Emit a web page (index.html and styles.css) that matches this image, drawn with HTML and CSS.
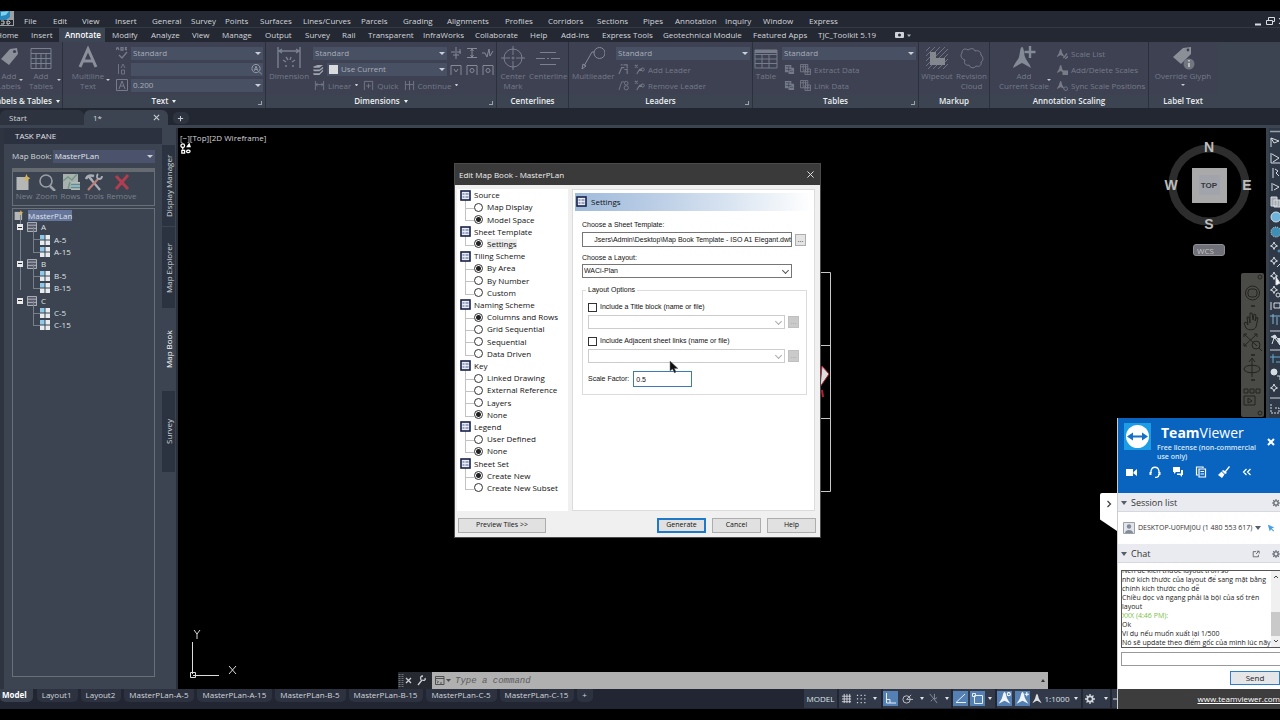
FILE: index.html
```html
<!DOCTYPE html>
<html lang="en">
<head>
<meta charset="utf-8">
<title>Map Book - MasterPLan</title>
<link rel="stylesheet" href="styles.css">
</head>
<body>
<svg class="defs" aria-hidden="true">
  <symbol id="node" viewBox="0 0 11 11"><rect x="1" y="1" width="9" height="9" fill="#e8edf8" stroke="#17204a" stroke-width="1.6"/><path d="M2.5 4h2M5.5 4h3M2.5 7h2M5.5 7h3" stroke="#4d5a8c"/></symbol>
  <symbol id="set" viewBox="0 0 11 11"><path d="M.5.5h10v10H.5zM.5 3.5h10M.5 7h10" fill="#555a68" stroke="#b9bcc4"/></symbol>
  <symbol id="tile" viewBox="0 0 10 10"><path fill="#8fc9ea" d="M0 0h4.5v4.5H0z"/><path fill="#e7ebee" d="M5.5 0H10v4.5H5.5zM0 5.5h4.5V10H0zM5.5 5.5H10V10H5.5z"/></symbol>
  <symbol id="page" viewBox="0 0 14 16"><path d="M0 3h12v13H0z" fill="#b5b7b7"/><path d="m10 0 1.3 3 2.7 1.2-2.7 1.3L10 8.500 8.700 5.500 6 4.200 8.700 3z" fill="#d3b362"/></symbol>
  <symbol id="dimh" viewBox="0 0 12 12"><path d="M1.500 1v10M10.500 1v10M2 5h8M4 3.500 2 5l2 1.500M8 3.500 10 5 8 6.500" fill="none" stroke="currentColor"/></symbol>
  <symbol id="quick" viewBox="0 0 12 12"><path d="M1.500 11V1.500h9V11M6 4v5M3.500 6.500h5" fill="none" stroke="currentColor"/></symbol>
  <symbol id="cont" viewBox="0 0 12 12"><path d="M1.500 1v10M6 1v10M10.500 1v10M2 5h8" fill="none" stroke="currentColor"/></symbol>
  <symbol id="brk" viewBox="0 0 12 12"><path d="M1 5h4M7 5h4M6 0v12M3 8h6M10 2v5" fill="none" stroke="currentColor"/></symbol>
  <symbol id="space" viewBox="0 0 12 12"><path d="M1 1.500h10M1 10.500h10M6 2v8M4.500 4 6 2l1.500 2M4.500 8 6 10l1.500-2" fill="none" stroke="currentColor"/></symbol>
  <symbol id="jog" viewBox="0 0 12 12"><path d="M0 6h3l2 4 2-8 1 7 3-5" fill="none" stroke="currentColor"/></symbol>
  <symbol id="tol" viewBox="0 0 12 12"><path d="M1 12V2.500h10V12M4 6l2 3 2-3" fill="none" stroke="currentColor"/></symbol>
  <symbol id="insp" viewBox="0 0 12 12"><path d="M1 12V2.500h10V12" fill="none" stroke="currentColor"/><circle cx="6" cy="7.500" r="2" fill="none" stroke="currentColor"/></symbol>
  <symbol id="leadA" viewBox="0 0 12 12"><path d="M1 11 4 4h3M6 1h4v4M7 6h3v5M3 1h2" fill="none" stroke="currentColor" stroke-width="1.300"/></symbol>
  <symbol id="leadB" viewBox="0 0 12 12"><path d="M1 11 4 2h3" fill="none" stroke="currentColor"/><circle cx="9" cy="3.500" r="2" fill="none" stroke="currentColor"/><circle cx="9" cy="8.500" r="2.300" fill="none" stroke="currentColor"/></symbol>
  <symbol id="leadC" viewBox="0 0 12 12"><path d="m1 1 3 3m0-3L1 4M3 11l3-5 3-1M6 7h3" fill="none" stroke="currentColor" stroke-width="1.200"/><circle cx="9.500" cy="6" r="1.700" fill="none" stroke="currentColor"/></symbol>
  <symbol id="xtr" viewBox="0 0 12 12"><path d="M1 1h7v3h3v7H5V9H1z" fill="currentColor"/><path d="M2 3h5M2 6h6M6 8h4M5 3v5" stroke="#3d4052" stroke-width=".7"/></symbol>
  <symbol id="grid" viewBox="0 0 12 12"><path d="M.500.500h8v8h-8zM.500 3h8M3.500.500v8M6 .500v8M5.500 5.500h6v6h-6zM5.500 8.500h6M8.500 5.500v6" fill="none" stroke="currentColor"/></symbol>
  <symbol id="man" viewBox="0 0 12 12"><path d="M6 0c1.300 0 1.500 4 2.500 6s2 3 3 5L7 8.500 6 8 5 8.500.500 11c1-2 2-3 3-5S4.700 0 6 0z" fill="currentColor"/></symbol>
  <symbol id="gear" viewBox="0 0 12 12"><circle cx="6" cy="6" r="3.200" fill="none" stroke="currentColor" stroke-width="2"/><path d="M6 0v3M6 9v3M0 6h3M9 6h3M1.800 1.800l2 2M8.200 8.200l2 2M10.200 1.800l-2 2M3.800 8.200l-2 2" stroke="currentColor" stroke-width="1.600"/></symbol>
  <symbol id="spark" viewBox="0 0 12 12"><path d="m4 1 1 2.500L7.500 5 5 6 4 8.500 3 6 .500 5 3 3.500z" fill="none" stroke="#d4dbe2"/></symbol>
</svg>

<div class="app">
  <header class="menubar">
    <svg class="logo" viewBox="0 0 14 15"><path d="M0 0h14v15H0z" fill="#9aa0a6"/><path d="M0 0h10v6L6 9H0z" fill="#2a87bd"/><path d="M1 1 9 0 6 4 1 5z" fill="#7bd0ec"/><path d="M0 9h13v5H0z" fill="#22262b"/><path d="M1 10h3v3H1M7 10v3h2l1-1.500L9 10z" fill="none" stroke="#cfd2d6"/></svg>
    <nav class="menu">
      <a href="#">File</a><a href="#">Edit</a><a href="#">View</a><a href="#">Insert</a><a href="#">General</a><a href="#">Survey</a><a href="#">Points</a><a href="#">Surfaces</a><a href="#">Lines/Curves</a><a href="#">Parcels</a><a href="#">Grading</a><a href="#">Alignments</a><a href="#">Profiles</a><a href="#">Corridors</a><a href="#">Sections</a><a href="#">Pipes</a><a href="#">Annotation</a><a href="#">Inquiry</a><a href="#">Window</a><a href="#">Express</a>
    </nav>
    <svg class="winctl" viewBox="0 0 26 12" fill="none" stroke="#d8dbe0"><path d="M1 9.500h6" stroke-width="2"/><path d="M12.500 5.500h6v4h-6zM14.500 5V2.500h6v4H19M25 3l5 6M30 3l-5 6" /></svg>
  </header>

  <nav class="tabs">
    <a href="#">Home</a><a href="#">Insert</a><a href="#" class="on">Annotate</a><a href="#">Modify</a><a href="#">Analyze</a><a href="#">View</a><a href="#">Manage</a><a href="#">Output</a><a href="#">Survey</a><a href="#">Rail</a><a href="#">Transparent</a><a href="#">InfraWorks</a><a href="#">Collaborate</a><a href="#">Help</a><a href="#">Add-ins</a><a href="#">Express Tools</a><a href="#">Geotechnical Module</a><a href="#">Featured Apps</a><a href="#">TJC_Toolkit 5.19</a>
    <svg class="tabmore" viewBox="0 0 16 8"><rect y="1" width="9" height="6" rx="1" fill="#cfd2d8"/><circle cx="4.500" cy="4" r="1.500" fill="#232834"/><path d="M12 3.500h4L14 6z" fill="#aeb3bc"/></svg>
  </nav>

  <section class="ribbon">
    <div class="panel p-labels">
      <div class="body">
        <button class="big w-lab"><svg class="ic" viewBox="0 0 24 24"><path d="m4 13 9-10 7-1 1 6-9 11z" fill="#8b8f9a"/><circle cx="17.500" cy="5.500" r="1.600" fill="#3d4052"/></svg>Add<br>Labels<i class="arr"></i></button>
        <button class="big w-tab"><svg class="ic" viewBox="0 0 24 24"><path d="M2 2.500h20v20H2zM2 7.500h20M2 12.500h20M2 17.500h20M7 7v15M12 7v15M17 7v15" fill="none" stroke="#7b8090"/></svg>Add<br>Tables<i class="arr"></i></button>
      </div>
      <h2>Labels &amp; Tables <i class="tri"></i></h2>
    </div>

    <div class="panel p-text">
      <div class="body">
        <button class="big w-multi"><svg class="ic" viewBox="0 0 24 24"><path d="M4 21 12 3l8 18M7 15h10" fill="none" stroke="#8b8f9a" stroke-width="3"/></svg>Multiline<br>Text<i class="arr"></i></button>
        <div class="iconcol">
          <svg viewBox="0 0 12 12"><path d="M0 3 1.500 0 3 3M5 0v3h2V0zM11 .500H9.500v2H11M3 8l3 3 5-6" fill="none" stroke="#777c8b" stroke-width="1.300"/></svg>
          <svg viewBox="0 0 12 12"><path d="M2.500 1v10M5 5l2-4 2 4M5.500 7v4h3V7z" fill="none" stroke="#6f7484"/></svg>
          <svg viewBox="0 0 12 12"><path d="M.500.500h11v11H.500zM3 10l3-8 3 8M4 7h4" fill="none" stroke="#777c8b"/></svg>
        </div>
        <div class="rows grow">
          <label class="combo"><select aria-label="Text style"><option>Standard</option></select></label>
          <div class="find"><input type="text" aria-label="Find text"><svg viewBox="0 0 12 12"><circle cx="5.500" cy="5.500" r="4.500" fill="none" stroke="#9a9faf"/><path d="m9 9 3 3M3.500 8l2-5 2 5M4.500 6.500h2" fill="none" stroke="#9a9faf"/></svg></div>
          <label class="combo"><select aria-label="Text height"><option>0.200</option></select></label>
        </div>
      </div>
      <h2>Text <i class="tri"></i><i class="launch"></i></h2>
    </div>

    <div class="panel p-dim">
      <div class="body">
        <button class="big w-dim"><svg class="ic" viewBox="0 0 24 24"><path d="M1 1v21M23 1v21M2 5h20M5 3 2 5l3 2M19 3l3 2-3 2M6 14l3 2M18 14l-3 2M9 11l2 3M14 11l-1 3M8 20h2M15 20h2" fill="none" stroke="#7b8090" stroke-width="1.400"/></svg>Dimension</button>
        <div class="rows dimrows">
          <label class="combo"><select aria-label="Dimension style"><option>Standard</option></select></label>
          <div class="line"><svg class="s" viewBox="0 0 12 12"><path d="m0 3 5-2h6L7 4H1zM0 6l7 0 4-3v2L7 8H1zM0 10h7l4-4v2L7 12H1z" fill="#a0a5b0"/></svg><label class="combo grow swatch"><select aria-label="Dimension layer"><option>Use Current</option></select></label></div>
          <div class="line dimcmds"><button><svg class="s"><use href="#dimh"/></svg>Linear<i class="dot"></i></button><button><svg class="s"><use href="#quick"/></svg>Quick</button><button><svg class="s"><use href="#cont"/></svg>Continue<i class="dot"></i></button></div>
        </div>
        <div class="icongrid"><svg><use href="#brk"/></svg><svg><use href="#space"/></svg><svg><use href="#jog"/></svg><svg><use href="#tol"/></svg><svg><use href="#insp"/></svg><svg><use href="#insp"/></svg></div>
      </div>
      <h2>Dimensions <i class="tri"></i><i class="launch"></i></h2>
    </div>

    <div class="panel p-center">
      <div class="body">
        <button class="big w-cm"><svg class="ic" viewBox="0 0 24 24"><circle cx="12" cy="12" r="9" fill="none" stroke="#7b8090"/><path d="M12 0v9M12 15v9M0 12h9M15 12h9M12 10.500v3M10.500 12h3" stroke="#7b8090"/></svg>Center<br>Mark</button>
        <button class="big w-cl"><svg class="ic" viewBox="0 0 24 24"><path d="M4 6.500h16M4 18.500h16M0 12.500h9M11 12.500h2M15 12.500h9" stroke="#7b8090"/></svg>Centerline</button>
      </div>
      <h2>Centerlines</h2>
    </div>

    <div class="panel p-lead">
      <div class="body">
        <button class="big w-ml"><svg class="ic" viewBox="0 0 24 24"><circle cx="18.500" cy="7" r="5.500" fill="none" stroke="#858a97"/><path d="M13 6h-2L3 20M1 23l1-5 3 2z" fill="none" stroke="#858a97"/></svg>Multileader</button>
        <div class="rows grow">
          <label class="combo"><select aria-label="Leader style"><option>Standard</option></select></label>
          <div class="line cmd"><svg class="s"><use href="#leadA"/></svg><button><svg class="s"><use href="#leadC"/></svg>Add Leader</button></div>
          <div class="line cmd"><svg class="s"><use href="#leadB"/></svg><button><svg class="s"><use href="#leadC"/></svg>Remove Leader</button></div>
        </div>
      </div>
      <h2>Leaders<i class="launch"></i></h2>
    </div>

    <div class="panel p-tables">
      <div class="body">
        <button class="big w-tb"><svg class="ic" viewBox="0 0 24 24"><path d="M1 4h22v18H1zM1 8.500h22M1 13h22M1 17.500h22M8 8v14M15 8v14" fill="none" stroke="#777c8b"/><path d="M1 4h22v3H1z" fill="#777c8b"/></svg>Table</button>
        <div class="rows grow">
          <label class="combo"><select aria-label="Table style"><option>Standard</option></select></label>
          <div class="line cmd"><svg class="s"><use href="#xtr"/></svg><button><svg class="s"><use href="#grid"/></svg>Extract Data</button></div>
          <div class="line cmd"><svg class="s"><use href="#xtr"/></svg><button><svg class="s"><use href="#grid"/></svg>Link Data</button></div>
        </div>
      </div>
      <h2>Tables<i class="launch"></i></h2>
    </div>

    <div class="panel p-mark">
      <div class="body">
        <button class="big w-wipe"><svg class="ic" viewBox="0 0 24 24"><path d="M1 5l4-4M1 10l9-9M1 15 15 1M1 20 20 1M3 23 23 3M8 23 23 8M13 23l10-10M18 23l5-5" stroke="#6f7484"/><path d="M5 6h6v6h9v7H5z" fill="#83888f"/></svg>Wipeout</button>
        <button class="big w-rev"><svg class="ic" viewBox="0 0 24 24"><path d="M5 14c-4-1-5-5-3-7 0-4 3-5 6-3 3-2 6-2 7 1 4-1 6 1 6 4 3 3 2 6 0 7 1 4-3 5-5 4-2 3-6 2-7-1-2 1-6-1-4-5z" fill="none" stroke="#777c8b"/></svg>Revision<br>Cloud</button>
      </div>
      <h2>Markup</h2>
    </div>

    <div class="panel p-scale">
      <div class="body">
        <button class="big w-scale"><svg class="ic" viewBox="0 0 24 24"><path d="M10 1c2 0 2 7 3 10s5 7 6 11l-7-4-2-1-2 1-7 4c1-4 5-8 6-11S8 1 10 1z" fill="#858a97"/><path d="M18 0v12M12.500 6h11" stroke="#858a97" stroke-width="2.400"/></svg>Add<br>Current Scale<i class="arr"></i></button>
        <div class="rows scales">
          <button class="line"><svg class="s" viewBox="0 0 12 12"><use href="#man" x="-1" width="10" height="12"/><path d="m7 11 4-5M9 12l3-3" stroke="currentColor" stroke-width="1.500"/></svg>Scale List</button>
          <button class="line"><svg class="s" viewBox="0 0 12 12"><use href="#man" x="-1" width="10" height="12"/><path d="M6 7h6v5H6z" fill="currentColor"/></svg>Add/Delete Scales</button>
          <button class="line"><svg class="s" viewBox="0 0 12 12"><use href="#man" x="-1" width="10" height="12"/><circle cx="9.500" cy="9.500" r="2" fill="#3d4152" stroke="currentColor"/></svg>Sync Scale Positions</button>
        </div>
      </div>
      <h2>Annotation Scaling</h2>
    </div>

    <div class="panel p-glyph">
      <div class="body">
        <button class="big w-glyph"><svg class="ic" viewBox="0 0 24 24"><path d="m2 11 10-9 8-1v7L10 18z" fill="#8b8f98"/><circle cx="17" cy="4" r="1.400" fill="#3d4052"/><circle cx="18" cy="18" r="5.500" fill="#71767f"/><path d="M18 17v4M18 14v1.500" stroke="#d0d3d8" stroke-width="1.500"/></svg>Override Glyph<i class="arr below"></i></button>
      </div>
      <h2>Label Text</h2>
    </div>
  </section>

  <nav class="docs">
    <a href="#" class="d1">Start</a>
    <a href="#" class="d2 on"><span>1*</span><svg viewBox="0 0 8 8"><path d="m1 1 6 6M7 1 1 7" stroke="#c9ccd2" stroke-width="1.300"/></svg></a>
    <button aria-label="New drawing"><svg viewBox="0 0 8 8"><path d="M4 1v6M1 4h6" stroke="#c9ccd2" stroke-width="1.200"/></svg></button>
  </nav>

  <main class="main">
    <aside class="side">
      <div class="task">
        <h3>TASK PANE</h3>
        <div class="mapbook"><label for="mb">Map Book:</label><span class="combo"><select id="mb"><option>MasterPLan</option></select></span></div>
        <div class="tools">
          <button class="t1"><svg viewBox="0 0 18 18"><use href="#page" x="1" y="1" width="15" height="16"/></svg>New</button>
          <button class="t2"><svg viewBox="0 0 18 18" fill="none" stroke="#9a9ea6"><circle cx="8" cy="8" r="6" stroke-width="1.600"/><path d="m12 13 5 5" stroke-width="2.500"/></svg>Zoom</button>
          <button class="t3"><svg viewBox="0 0 18 18"><path d="M1 1h15v15H1z" fill="#a9b0ae"/><path d="m1 8 5-4 4 3 5-6M6 16l2-7" fill="none" stroke="#6f9a86" stroke-width="1.500"/><path d="M9 9h9v8H9z" fill="#b5bcb8"/><path d="M9 11.500h9M9 14.500h9" stroke="#5b8e9c" stroke-width="1.400"/></svg>Rows</button>
          <button class="t4"><svg viewBox="0 0 18 18" fill="none"><path d="M5 5 15 17" stroke="#a9adb5" stroke-width="2.200"/><path d="M13 6 3 17" stroke="#b97d78" stroke-width="2.200"/><path d="M1 6c1-3 4-4 8-3M4 4l3 3" stroke="#a9adb5" stroke-width="2.400"/><path d="M13 1c-2 2-1 5 1 5s3-1 3-3" stroke="#a9adb5" stroke-width="1.800"/></svg>Tools</button>
          <button class="t5"><svg viewBox="0 0 18 18"><path d="m3 3 12 13M15 2 3 16" stroke="#b13d50" stroke-width="3"/></svg>Remove</button>
        </div>
        <div class="tree">
          <ul>
            <li class="root"><svg><use href="#page"/></svg><span>MasterPLan</span></li>
            <li class="g"><b></b><svg><use href="#set"/></svg>A</li>
            <li class="c"><svg><use href="#tile"/></svg>A-5</li>
            <li class="c"><svg><use href="#tile"/></svg>A-15</li>
            <li class="g"><b></b><svg><use href="#set"/></svg>B</li>
            <li class="c"><svg><use href="#tile"/></svg>B-5</li>
            <li class="c"><svg><use href="#tile"/></svg>B-15</li>
            <li class="g last"><b></b><svg><use href="#set"/></svg>C</li>
            <li class="c"><svg><use href="#tile"/></svg>C-5</li>
            <li class="c"><svg><use href="#tile"/></svg>C-15</li>
          </ul>
        </div>
      </div>
      <nav class="vtabs"><a href="#">Display Manager</a><a href="#">Map Explorer</a><a href="#" class="on">Map Book</a><a href="#">Survey</a></nav>
    </aside>

    <section class="canvas">
      <p class="viewlabel">[−][Top][2D Wireframe]</p>
      <svg class="gizmo" viewBox="0 0 12 12" fill="none" stroke="#fff" stroke-width="1.400"><circle cx="3" cy="3" r="2"/><path d="M3 4v3M8 4l2-3 1 3zM2 8h3v3H2z"/><path d="M7 9c1-2 4-1 4 0s-3 3-4 0z"/></svg>
      <svg class="ucs" viewBox="0 0 50 52" fill="none" stroke="#dcdcdc"><path d="M2.500 14v32M3 47.500h26M.500 44.500h5v5h-5zM4 2l3 4 3-4M7 6v5M39 38l7 8M46 38l-7 8"/></svg>
      <svg class="sheets" viewBox="0 0 20 221" fill="none" stroke="#c8c8c8"><path d="M0 .500h18.500V219.500H0M0 73.500h18.500M0 146.500h18.500"/><path d="m10 94 7 8-9 13z" fill="#ddd" stroke="#b32036"/><path d="m10 118 1 7" stroke="#b32036" stroke-width="2"/></svg>

      <svg class="cube" viewBox="0 0 90 92"><circle cx="45" cy="45" r="36.500" fill="none" stroke="#2d2d2d" stroke-width="8"/><path d="M28 28h35v35H28z" fill="#a9a9a9"/><path d="M35 35h21v20H35z" fill="#a1a4aa"/><g font-family="Liberation Sans, sans-serif" font-weight="700" text-anchor="middle"><g fill="#bdbdbd" font-size="14" stroke="none"><text x="45" y="12">N</text><text x="45" y="89">S</text><text x="7" y="50">W</text><text x="83" y="50">E</text></g><text x="45" y="48" font-size="8" fill="#33373d">TOP</text></g></svg>
      <button class="wcs">WCS <i></i></button>
      <svg class="navbar" viewBox="0 0 23 144" fill="none" stroke="#23221f"><rect width="23" height="144" rx="2" fill="#4a4a47" stroke="none"/><circle cx="19" cy="4" r="2"/><circle cx="11.500" cy="20" r="7"/><rect x="7" y="16" width="9" height="8" rx="3"/><path d="M10 33h4M10 82h4M10 107h4" stroke-width="1.500"/><path d="m5 55-2-5 2-1 2 3-1-8 2 0 1 6V40h2l1 7 1-6 2 1-1 6 2-4 1 1-2 9c-1 3-7 4-10 1zM3 61l13 12M16 61 3 73M3 64v-3h3M3 70v3h3M13 61h3v3"/><circle cx="15" cy="72" r="4"/><path d="m18 75 3 3M11 86v18M8 89l3-4 3 4M3 96c0-5 16-5 16 0s-16 5-16 0M3 116h4v4H3zM9 116h4v4H9zM15 116h4v4h-4zM3 123h11v9H3zM7 125v5l4-2z"/><circle cx="19" cy="140" r="2"/></svg>

      <div class="cmdline">
        <svg class="grip" viewBox="0 0 30 17"><path d="M4.500 2v13M1.500 2v13" stroke="#6d7177" stroke-width="2" stroke-dasharray="1 1"/><path d="m8 6 5 5M13 6l-5 5M20 13l4-5" fill="none" stroke="#cfd1d5" stroke-width="1.300"/><path d="M23 8c-1-3 0-4 2-4M24 8c2 1 4 0 3-2" fill="none" stroke="#cfd1d5" stroke-width="1.300"/></svg>
        <label class="cmdbox"><svg viewBox="0 0 16 10"><path d="M.500.500h8.500v8H.500zM.500 2.500H9M2 4.500 3.500 6 2 7M5 7h2" fill="none" stroke="#505050"/><path d="M11 3h5l-2.500 3z" fill="#505050"/></svg><input type="text" aria-label="Command" placeholder="Type a command"><i class="up"></i></label>
      </div>
    </section>

    <aside class="rail">
      <svg viewBox="0 0 10 290" fill="none" stroke="#d4dbe2"><path d="M0 1.500h10M0 201h10M0 220h10M0 268h10" stroke="#99a0aa" stroke-width="1.500"/><path d="M1 8v9M1 8l8 3-5 2zM1 23v10h9M2 24l7 4-6 4M3 38v10M5 39l3 2-2 2 3 3M2 53v8M3 54l6 3-5 3" fill="none"/><path d="M1 67h6v9H1zM4 70h6v7H4z" fill="#a3a8ad"/><circle cx="6" cy="87" r="5" fill="#6db4dc"/><circle cx="6" cy="102" r="5" fill="#3f8fb5" stroke-dasharray="1 1"/><use href="#spark" x="0" y="111" width="12" height="12"/><circle cx="9" cy="121" r="1" stroke="#57a7d4"/><use href="#spark" x="0" y="126" width="12" height="12"/><path d="m7 137 3-3"/><use href="#spark" x="0" y="141" width="12" height="12"/><path d="M6 147v8l4-2z" fill="#fff"/><use href="#spark" x="0" y="155" width="12" height="12"/><circle cx="8" cy="165" r="2"/><path d="M1 172v8M4 173h6v5H4z"/><path d="M0 186h10M3 184v10M7 187v8" stroke="#7fb6d6"/><path d="M1 207l4-2 4 6M5 205l-3 9M5 208l5 7V208" fill="#d4dbe2"/><path d="M0 227h10M3 224v9M6 232h4" stroke="#62a9cf"/><circle cx="4" cy="242" r="3" fill="#d4dbe2"/><path d="M7 246h3v4"/><use href="#spark" x="0" y="253" width="12" height="12"/><path d="M1 274v9h8v-5H4" stroke-dasharray="2 1"/></svg>
    </aside>
  </main>

  <footer class="bottom">
    <nav class="layouts"><a href="#" class="on">Model</a><a href="#">Layout1</a><a href="#">Layout2</a><a href="#">MasterPLan-A-5</a><a href="#">MasterPLan-A-15</a><a href="#">MasterPLan-B-5</a><a href="#">MasterPLan-B-15</a><a href="#">MasterPLan-C-5</a><a href="#">MasterPLan-C-15</a><a href="#">+</a></nav>
    <div class="status">
      <button class="cell s1">MODEL</button>
      <span class="cell s2"><svg viewBox="0 0 12 12" stroke="#d5d8dd"><path d="M3.500 1v10M6.500 1v10M9.500 1v10M1 3.500h10M1 6.500h10M1 9.500h10"/></svg><svg viewBox="0 0 12 12" stroke="#d5d8dd" stroke-width="1.300" stroke-dasharray="1.300 2.700"><path d="M1 2.500h10M1 6.500h10M1 10.500h10"/></svg><i class="tri"></i></span>
      <span class="cell s3"><svg class="hot" viewBox="0 0 15 15" fill="none" stroke="#e6edf5"><path d="M3.500 2v10H13M3.500 8.500H7V12"/></svg><svg viewBox="0 0 12 12" fill="none" stroke="#c5c9cf"><circle cx="5" cy="7" r="4"/><path d="M5 7l5-5M5 7h7"/></svg><i class="tri"></i><svg viewBox="0 0 12 12" fill="none" stroke="#8c929c"><path d="m2 1 8 10M7 1v6M7 7l3-2M3 9l2-2"/></svg><i class="tri"></i></span>
      <span class="cell s4"><svg class="hot" viewBox="0 0 15 15" fill="none" stroke="#e6edf5"><path d="M12 3 3 11.500h10"/></svg><svg class="hot" viewBox="0 0 15 15" fill="none" stroke="#e6edf5"><path d="M4.500 4.500h8v8h-8zM2.500 2.500h3v3h-3z"/></svg><i class="tri"></i></span>
      <span class="cell s5"><svg class="hot" viewBox="-1 -1 14 14" color="#f1f5f8"><use href="#man" width="12" height="12"/><circle cx="10" cy="2" r="1.500" fill="#5c86b5" stroke="#fff"/></svg><svg class="hot" viewBox="-1 -1 14 14" color="#f1f5f8"><use href="#man" width="12" height="12"/><path d="M10 0v4M8 2h4" stroke="#fff"/></svg><svg class="sm" color="#dcdfe4"><use href="#man"/></svg><span>1:1000</span><i class="tri"></i></span>
      <span class="cell s6"><svg class="sm" color="#d5d8dd"><use href="#gear"/></svg><i class="tri"></i></span>
      <span class="cell s7"><svg viewBox="0 0 4 4"><path d="M0 2h4" stroke="#dfe2e6"/></svg></span>
    </div>
  </footer>
</div>

<section class="dialog" role="dialog" aria-label="Edit Map Book - MasterPLan">
  <header><span>Edit Map Book - MasterPLan</span><button aria-label="Close"><svg viewBox="0 0 8 8"><path d="m.500.500 7 7M7.500.500l-7 7" stroke="#e4e4e4" stroke-width="1.100"/></svg></button></header>
  <div class="content">
    <div class="nav">
      <div class="list">
        <h4><svg><use href="#node"/></svg>Source</h4>
        <label><input type="radio" name="src">Map Display</label>
        <label class="end"><input type="radio" name="src" checked>Model Space</label>
        <h4><svg><use href="#node"/></svg>Sheet Template</h4>
        <label class="end"><input type="radio" name="tpl" checked><span class="cur">Settings</span></label>
        <h4><svg><use href="#node"/></svg>Tiling Scheme</h4>
        <label><input type="radio" name="til" checked>By Area</label>
        <label><input type="radio" name="til">By Number</label>
        <label class="end"><input type="radio" name="til">Custom</label>
        <h4><svg><use href="#node"/></svg>Naming Scheme</h4>
        <label><input type="radio" name="nam" checked>Columns and Rows</label>
        <label><input type="radio" name="nam">Grid Sequential</label>
        <label><input type="radio" name="nam">Sequential</label>
        <label class="end"><input type="radio" name="nam">Data Driven</label>
        <h4><svg><use href="#node"/></svg>Key</h4>
        <label><input type="radio" name="key">Linked Drawing</label>
        <label><input type="radio" name="key">External Reference</label>
        <label><input type="radio" name="key">Layers</label>
        <label class="end"><input type="radio" name="key" checked>None</label>
        <h4><svg><use href="#node"/></svg>Legend</h4>
        <label><input type="radio" name="leg">User Defined</label>
        <label class="end"><input type="radio" name="leg" checked>None</label>
        <h4><svg><use href="#node"/></svg>Sheet Set</h4>
        <label><input type="radio" name="ss" checked>Create New</label>
        <label class="end"><input type="radio" name="ss">Create New Subset</label>
      </div>
    </div>
    <div class="pane">
      <h3><svg><use href="#node"/></svg>Settings</h3>
      <div class="form">
        <label class="cap" for="tplfile">Choose a Sheet Template:</label>
        <div class="field"><div class="clip"><input id="tplfile" type="text" value="Jsers\Admin\Desktop\Map Book Template - ISO A1 Elegant.dwt"></div><button class="more">...</button></div>
        <label class="cap second" for="lay">Choose a Layout:</label>
        <span class="drop"><select id="lay"><option>WACi-Plan</option></select></span>
        <fieldset>
          <legend>Layout Options</legend>
          <label class="check"><input type="checkbox">Include a Title block (name or file)</label>
          <div class="field"><span class="drop off"><select disabled aria-label="Title block"><option></option></select></span><button class="more" disabled>...</button></div>
          <label class="check"><input type="checkbox">Include Adjacent sheet links (name or file)</label>
          <div class="field"><span class="drop off"><select disabled aria-label="Adjacent sheet links"><option></option></select></span><button class="more" disabled>...</button></div>
          <div class="scale"><label for="sf">Scale Factor:</label><input id="sf" type="text" value="0.5"></div>
        </fieldset>
      </div>
    </div>
  </div>
  <footer><button class="prev">Preview Tiles &gt;&gt;</button><button class="def">Generate</button><button>Cancel</button><button>Help</button></footer>
</section>
<svg class="cursor" viewBox="0 0 10 14"><path d="M1 1v10l2.500-2 2 4 1.500-1-1.500-3.500H9z" fill="#111" stroke="#777" stroke-width=".5"/></svg>

<section class="tv">
  <button class="flap" aria-label="Collapse"><svg viewBox="0 0 6 8"><path d="m1.500 1 3 3-3 3" fill="none" stroke="#444" stroke-width="1.300"/></svg></button>
  <header>
    <svg class="tvlogo" viewBox="0 0 27 27"><rect width="27" height="27" fill="#1c9de5"/><circle cx="13.500" cy="13.500" r="11.500" fill="#fff"/><path d="m3 13.500 6-4v3h9v-3l6 4-6 4v-3H9v3z" fill="#1670c4"/></svg>
    <div class="tvtext"><h2><b>Team</b>Viewer</h2><p>Free license (non-commercial<br>use only)</p></div>
    <button class="x" aria-label="Close"><svg viewBox="0 0 8 8"><path d="m1 1 6 6M7 1 1 7" stroke="#fff" stroke-width="2"/></svg></button>
    <div class="tvicons">
      <svg viewBox="0 0 12 12" fill="#fff"><path d="M0 3h7v7H0zM7.500 6 11 3v7L7.500 7.500z"/></svg>
      <svg viewBox="0 0 12 12" fill="none" stroke="#fff" stroke-width="1.300"><path d="M2 7V5c1-5 7-5 8 0v2M10 8c0 3-2 3.500-4 3.500"/><path d="M1.500 6v3M10.500 6v3" stroke-width="2"/></svg>
      <svg viewBox="0 0 12 12" fill="#fff"><path d="M1 1h7v5H4L2 8V6H1z"/><path d="M9 4h2v5h-1v2L8 9H5V7.500h4z"/></svg>
      <svg viewBox="0 0 12 12" fill="none" stroke="#fff" stroke-width="1.200"><path d="M8 2V1H1.500v8H3M4 3h6.500v8H4zM5.500 5.500H9M5.500 8H9"/></svg>
      <svg viewBox="0 0 12 12" fill="#fff"><path d="m11 0 1 1-4 5 1 1-2 1-3-3 1-1 2 1zM3.500 5.500l3 3L4 12 0 9z"/></svg>
      <svg viewBox="0 0 12 12" fill="none" stroke="#fff" stroke-width="1.300"><path d="M5.500 3 2.500 6l3 3M9.500 3l-3 3 3 3"/></svg>
    </div>
  </header>
  <h3><i class="tri"></i>Session list<svg class="g1"><use href="#gear"/></svg></h3>
  <div class="session"><svg viewBox="0 0 12 12"><path d="M.500.500h11v11H.500z" fill="#e2e5ea" stroke="#9ba1ab"/><circle cx="6" cy="4.500" r="2.200" fill="#848c99"/><path d="M2 11c0-4 8-4 8 0z" fill="#848c99"/></svg><span>DESKTOP-U0FMJ0U (1 480 553 617)</span><i class="tri"></i><svg class="ptr" viewBox="0 0 10 12"><path d="m1 2 8 3-3 1.500 3 3-1 1-3-3-1.500 3z" fill="#4aa0e6"/></svg></div>
  <h3><i class="tri"></i>Chat<svg class="pop" viewBox="0 0 10 10" fill="none" stroke="#555"><path d="M5 2H1.500v6.500H8V6M5 5l3.500-3.500M6 1.500h3v3"/></svg><svg class="g1"><use href="#gear"/></svg></h3>
  <div class="chat">
    <div class="log"><div class="lines"><p>Nên để kích thước layout tròn số</p><p>nhớ kích thước của layout để sang mặt bằng</p><p>chính kích thước cho dễ</p><p>Chiều dọc và ngang phải là bội của số trên</p><p>layout</p><p class="who">XXX (4:46 PM):</p><p>Ok</p><p>Ví dụ nếu muốn xuất lại 1/500</p><p>Nó sẽ update theo điểm gốc của mình lúc nãy</p></div><div class="bar"><svg viewBox="0 0 6 4"><path d="m1 3 2-2 2 2" fill="none" stroke="#444"/></svg><i></i><svg viewBox="0 0 6 4"><path d="m1 1 2 2 2-2" fill="none" stroke="#444"/></svg></div></div>
    <input type="text" aria-label="Message">
    <button>Send</button>
  </div>
  <footer><a href="#">www.teamviewer.com</a></footer>
</section>
</body>
</html>
```

FILE: styles.css
```css
* { box-sizing: border-box; margin: 0; padding: 0; }
html, body { height: 100%; }
body { background: #000; overflow: hidden; position: relative; font: 8px/10px "Open Sans", "Noto Sans", sans-serif; color: #d3d6db; }
a { color: inherit; text-decoration: none; white-space: nowrap; }
button, input, select { font: inherit; color: inherit; background: none; border: 0; outline: 0; border-radius: 0; }
button { white-space: nowrap; }
select { appearance: none; width: 100%; height: 100%; opacity: 1; }
ul { list-style: none; }
h2, h3, h4 { font-size: inherit; font-weight: 400; }
svg { display: block; flex: none; }
.defs { position: absolute; width: 0; height: 0; }
.grow { flex: 1; }

.app { height: 100%; padding: 11px 0; display: flex; flex-direction: column; }

/* menu bar */
.menubar { height: 17px; background: #232832; display: flex; align-items: center; border-bottom: 1px solid #333b42; flex: none; }
.logo { width: 14px; height: 15px; align-self: flex-start; }
.menu { flex: 1; margin-left: 10px; display: grid; grid-template-columns: 29px 29px 33px 37px 39px 34px 35px 43px 58px 42px 44px 58px 43px 49px 46px 32px 50px 38px 46px 1fr; padding-top: 3px; }
.winctl { width: 26px; height: 12px; margin-top: 4px; }

.tabs { height: 14px; flex: none; background: #232832; display: grid; grid-template-columns: 35px 28px 53px 39px 41px 30px 43px 40px 37px 26px 55px 52px 55px 31px 41px 61px 90px 65px 77px 16px; margin-left: -4px; align-items: center; overflow: hidden; }
.tabs a { line-height: 14px; }
.tabs .on { background: #3c4553; color: #fff; font-weight: 600; padding-left: 6px; justify-self: start; width: 46px; }
.tabmore { width: 16px; height: 8px; }

/* ribbon */
.ribbon { height: 66px; background: #3b4450; display: flex; flex: none; overflow: hidden; }
.panel { display: flex; flex-direction: column; flex: none; border-right: 1px solid #2b313c; }
.panel .body { flex: 1; display: flex; align-items: flex-start; padding-top: 5px; background: #3d4152; color: #757a88; }
.panel h2 { position: relative; height: 13px; line-height: 12px; text-align: center; color: #eceef1; background: #3b4450; font-weight: 600; white-space: nowrap; }
.p-labels { width: 63px; } .p-text { width: 203px; } .p-dim { width: 231px; } .p-center { width: 72px; } .p-lead { width: 184px; }
.p-tables { width: 166px; } .p-mark { width: 71px; } .p-scale { width: 159px; } .p-glyph { width: 68px; }
.p-glyph { border-right: 0; }
.panel.p-labels h2 { margin-left: -10px; }
.tri { display: inline-block; border: 2px solid transparent; border-top: 3px solid currentColor; border-bottom: 0; vertical-align: middle; margin-left: 2px; }
.launch { position: absolute; right: 3px; bottom: 3px; width: 4px; height: 4px; border: solid #9da2ab; border-width: 0 1px 1px 0; }
.big { position: relative; display: block; text-align: center; line-height: 10px; flex: none; }
.big .ic { width: 24px; height: 24px; margin: -1px auto 1px; }
.arr { position: absolute; right: -1px; top: 32px; border: 2px solid transparent; border-top: 2px solid #c8cbd1; border-bottom: 0; }
.arr.below { right: 32px; top: 37px; }
.w-lab { width: 26px; margin-left: -4px; } .w-tab { width: 38px; }
.w-multi { width: 42px; margin-left: 4px; }
.w-dim { width: 42px; margin-left: 2px; }
.w-cm { width: 32px; } .w-cl { width: 38px; }
.w-ml { width: 42px; margin: 0 2px 0 3px; }
.w-tb { width: 26px; margin-right: 3px; }
.w-wipe { width: 36px; } .w-rev { width: 33px; }
.w-scale { width: 52px; margin: 0 7px 0 8px; }
.w-glyph { width: 68px; }
.iconcol { display: grid; gap: 4px; margin: 0 3px 0 7px; }
.iconcol svg { width: 12px; height: 12px; }
.rows { display: grid; grid-template-columns: minmax(0, 1fr); grid-auto-rows: 13px; gap: 3px; min-width: 0; padding-right: 2px; }
.dimrows { width: 134px; padding: 0; margin-left: 3px; flex: none; }
.combo { position: relative; display: block; height: 13px; background: #485063; color: #a8adb8; }
.combo select { padding: 0 10px 1px 2px; }
.combo::after { content: ""; position: absolute; right: 2px; top: 5px; border: 3px solid transparent; border-top: 3px solid #ccd0d6; border-bottom: 0; }
.find { display: flex; background: #485063; padding-right: 1px; }
.find input { flex: 1; min-width: 0; }
.find svg { width: 11px; height: 12px; }
.line { display: flex; align-items: center; gap: 3px; text-align: left; white-space: nowrap; }
.s { width: 11px; height: 11px; }
.swatch select { padding-left: 14px; }
.swatch::before { content: ""; position: absolute; left: 2px; top: 2px; width: 9px; height: 9px; background: #d9dade; }
.line button { display: flex; align-items: center; gap: 3px; }
.cmd { gap: 5px; padding-left: 2px; }
.dimcmds { gap: 5px; padding-left: 1px; }
.dot { width: 3px; border: 1px solid transparent; border-top: 2px solid #c8cbd1; margin-left: 1px; }
.icongrid { display: grid; grid-template-columns: repeat(3, 12px); gap: 4px; padding-left: 3px; color: #858a97; }
.icongrid svg { width: 12px; height: 12px; }
.scales { color: #777c88; width: 90px; padding: 0; }

/* drawing tabs */
.docs { height: 20px; background: #222731; display: flex; align-items: flex-end; border-bottom: 3px solid #3b4450; flex: none; }
.docs a { height: 15px; line-height: 15px; border-radius: 6px 6px 0 0; background: #2d3440; padding-left: 9px; }
.d1 { width: 84px; }
.docs .on { width: 84px; background: #3b4450; display: flex; align-items: center; justify-content: space-between; padding-right: 8px; }
.docs svg { width: 7px; height: 7px; }
.docs button { width: 16px; height: 12px; background: #2d3440; border-radius: 5px; margin: 0 0 1px 5px; padding-left: 4px; }

.main { flex: 1; min-height: 0; display: flex; }
.side { width: 178px; flex: none; display: flex; background: #3b4450; border-left: 4px solid #2e3540; }
.task { flex: 1; display: flex; flex-direction: column; min-width: 0; padding: 0 7px 12px 8px; }
.task h3 { height: 16px; line-height: 16px; margin: 0 -7px 0 -8px; padding-left: 11px; background: #2c3140; color: #e2e4e8; }
.mapbook { display: flex; align-items: center; margin-top: 5px; gap: 1px; height: 14px; }
.mapbook .combo { flex: 1; background: #4a536b; color: #e2e4e8; }
.tools { display: flex; height: 38px; margin-top: 5px; border: 1px solid #687078; border-top: 4px solid #666b72; padding-top: 1px; color: #7b828d; flex: none; }
.tools button { text-align: center; line-height: 10px; flex: none; align-self: flex-start; }
.tools svg { width: 18px; height: 18px; margin: 0 auto; }
.t1 { width: 22px; } .t2 { width: 23px; } .t3 { width: 25px; } .t4 { width: 22px; } .t5 { width: 33px; }
.tree { flex: 1; margin-top: 2px; border: 1px solid #687078; }
.tree ul { height: 122px; display: flex; flex-direction: column; color: #dfe2e6; }
.tree li { flex: 1; display: flex; align-items: center; position: relative; }
.tree svg { width: 10px; height: 10px; }
.root span { background: #66759b; line-height: 11px; margin-left: 4px; }
.root svg { margin-left: 1px; }
.g { padding-left: 4px; gap: 4px; }
.g b { width: 6px; height: 6px; background: linear-gradient(#333, #333) center / 4px 1px no-repeat #e8eaec; z-index: 1; }
.c { padding-left: 27px; gap: 4px; }
.c::before { content: ""; position: absolute; left: 20px; top: -6px; width: 6px; height: 12px; border: solid #78808a; border-width: 0 0 1px 1px; }
.tree li:not(.root):not(.last)::after { content: ""; position: absolute; left: 7px; top: -6px; height: 14px; border-left: 1px solid #78808a; }
.tree .last ~ li::after { display: none; }
.vtabs { width: 16px; padding: 17px 3px 0 0; display: flex; flex-direction: column; gap: 1px; border-right: 2px solid #2b313b; }
.vtabs a { writing-mode: vertical-rl; transform: rotate(180deg); height: 81px; width: 13px; line-height: 13px; text-align: center; background: #2c3340; }
.vtabs .on { background: #3b4450; color: #fff; }

/* model space */
.canvas { flex: 1; min-width: 0; position: relative; background: #000; overflow: hidden; }
.viewlabel { padding: 5px 2px; }
.gizmo { position: absolute; left: 2px; top: 15px; width: 11px; height: 11px; }
.ucs { position: absolute; left: 12px; bottom: 9px; width: 50px; height: 52px; }
.sheets { position: absolute; left: 634px; top: 144px; width: 20px; height: 221px; }
.cube { position: absolute; right: 12px; top: 12px; width: 90px; height: 92px; }
.wcs { position: absolute; right: 41px; top: 116px; width: 32px; height: 12px; background: #707078; border: 1px solid #8e8e94; border-radius: 3px; color: #c4c4c8; line-height: 9px; text-align: left; padding-left: 3px; }
.navbar { position: absolute; right: 2px; top: 145px; width: 23px; height: 144px; }
.cmdline { position: absolute; left: 220px; right: 218px; bottom: 0; height: 17px; display: flex; background: #26292f; }
.grip { width: 30px; height: 17px; }
.cmdbox { flex: 1; display: flex; align-items: center; gap: 4px; background: #b0b0b0; padding: 0 3px; margin-left: 4px; }
.cmdbox svg { width: 16px; height: 10px; }
.cmdbox input { flex: 1; font: italic 9px/12px "Liberation Mono", monospace; color: #555; }
.cmdbox input::placeholder { color: #5c5c5c; opacity: 1; }
.up { border: 2px solid transparent; border-bottom: 3px solid #333; border-top: 0; }
.rail { width: 14px; background: #2f3846; border-left: 3px solid #39414c; flex: none; padding: 2px 0 0 1px; overflow: hidden; }
.rail svg { width: 10px; height: 290px; }

/* layout tabs and status */
.bottom { height: 20px; flex: none; display: flex; justify-content: space-between; background: #222633; padding-right: 162px; }
.layouts { display: flex; gap: 3px; height: 13px; line-height: 12px; }
.layouts a { background: #2c3240; border-radius: 0 0 5px 5px; padding: 0 6px 0 5px; }
.layouts .on { padding-left: 2px; margin-right: 1px; background: #39414f; color: #fff; font-weight: 700; }
.status { display: flex; gap: 2px; color: #dfe2e6; }
.cell { display: flex; align-items: center; justify-content: space-between; height: 19px; background: #323a49; padding: 0 2px; }
.cell svg { width: 11px; height: 11px; }
.cell .hot { width: 15px; height: 15px; background: #5580b3; }
.cell .sm { width: 10px; height: 10px; }
.s1 { width: 33px; justify-content: center; } .s2 { width: 42px; padding: 0 4px 0 2px; } .s3 { width: 68px; padding: 0 2px 0 0; } .s4 { width: 42px; padding: 0 3px 0 0; } .s5 { width: 84px; padding: 0 3px 0 0; } .s6 { width: 27px; }
.s7 { width: 6px; padding: 0 1px; }
.s7 svg { width: 4px; height: 4px; }

/* Edit Map Book */
.dialog { position: absolute; left: 454px; top: 163px; width: 367px; height: 375px; background: #f0f0f0; color: #111; border: 1px solid #4b4b4b; display: flex; flex-direction: column; }
.dialog header { height: 21px; background: #3a3a3a; color: #f0f0f0; display: flex; align-items: center; justify-content: space-between; padding: 0 6px 0 4px; flex: none; }
.dialog header svg { width: 7px; height: 7px; }
.content { flex: 1; display: flex; gap: 4px; padding: 4px 5px 0 2px; min-height: 0; }
.nav { width: 111px; background: #fff; }
.list { height: 305px; display: flex; flex-direction: column; padding-left: 3px; }
.list h4, .list label { flex: 1; display: flex; align-items: center; white-space: nowrap; position: relative; }
.list h4 { gap: 3px; }
.list svg { width: 11px; height: 11px; z-index: 1; }
.list label { padding-left: 14px; gap: 4px; }
.list label::before { content: ""; position: absolute; left: 5px; top: -6px; width: 8px; height: 13px; border: solid #c2c2c2; border-width: 0 0 1px 1px; }
.cur { background: #ececec; }
input[type="radio"] { appearance: none; width: 9px; height: 9px; border: 1px solid #333; border-radius: 50%; background: #fff; flex: none; z-index: 1; }
input[type="radio"]:checked { background: radial-gradient(circle, #222 0 2px, #fff 3px); }
.pane { flex: 1; min-width: 0; background: #fff; border: 1px solid #dcdcdc; padding: 3px 2px; }
.pane h3 { height: 18px; line-height: 16px; display: flex; align-items: center; gap: 4px; padding: 0 0 1px 1px; background: linear-gradient(90deg, #9fbbda, #b7cbe4 30%, #d9e4f1 65%, #fff); }
.pane h3 svg { width: 11px; height: 11px; }
.form { font: 7px/10px "Liberation Sans", Arial, sans-serif; }
.form { padding: 9px 5px 0 7px; }
.cap { display: block; line-height: 10px; margin-bottom: 2px; }
.field { display: flex; gap: 3px; align-items: center; }
.clip, .drop { width: 210px; height: 15px; border: 1px solid #767676; overflow: hidden; flex: none; }
.clip { display: flex; }
.clip input { flex: 1; min-width: 0; text-align: right; }
.more { width: 11px; height: 12px; background: #e4e4e4; border: 1px solid #adadad; line-height: 8px; text-align: center; }
.more:disabled { background: #cacaca; border-color: #c0c0c0; color: #999; }
.second { margin: 6px 0 1px; }
.drop { display: block; position: relative; height: 14px; }
.drop select { padding-left: 1px; color: #111; opacity: 1; }
.drop::after { content: ""; position: absolute; right: 3px; top: 3px; width: 4px; height: 4px; border: solid #555; border-width: 0 1px 1px 0; transform: rotate(45deg); }
.drop.off { width: 197px; border-color: #ccc; }
.drop.off::after { border-color: #aaa; }
fieldset { border: 1px solid #dcdcdc; margin: 7px 0 0; padding: 7px 6px 7px 5px; min-width: 0; }
legend { padding: 0 2px; margin-left: -2px; }
.check { display: flex; align-items: center; gap: 3px; height: 10px; margin-bottom: 3px; white-space: nowrap; }
.check input { appearance: none; width: 9px; height: 9px; border: 1px solid #333; background: #fff; }
.field + .check { margin-top: 7px; }
.scale { display: flex; align-items: center; gap: 4px; margin-top: 8px; }
.scale input { width: 59px; height: 16px; border: 1px solid #3d7ab8; padding-left: 2px; }
.dialog footer { height: 26px; display: flex; gap: 6px; align-items: center; padding: 2px 4px 0 3px; flex: none; font-size: 7px; }
.dialog footer button { width: 49px; height: 15px; background: #e1e1e1; border: 1px solid #adadad; }
.dialog footer .prev { width: 88px; margin-right: auto; }
.dialog footer .def { border: 2px solid #1e7ac9; }
.cursor { position: absolute; left: 669px; top: 360px; width: 10px; height: 14px; }

/* TeamViewer */
.tv { position: absolute; right: 0; bottom: 11px; width: 163px; height: 291px; background: #fff; color: #333; display: flex; flex-direction: column; border-left: 1px solid #c9ccd0; }
.flap { position: absolute; left: -18px; top: 75px; width: 17px; height: 38px; background: #fff; border-radius: 2px 0 0 0; clip-path: polygon(0 0, 100% 0, 100% 100%, 0 70%); padding: 0 0 17px 6px; }
.flap svg { width: 6px; height: 8px; }
.tv header { height: 75px; flex: none; background: #0864bf; color: #fff; display: grid; grid-template-columns: 27px 1fr 10px; column-gap: 6px; padding: 5px 3px 0 6px; align-content: start; }
.tvlogo { width: 27px; height: 27px; }
.tvtext h2 { font-size: 14px; line-height: 20px; padding-left: 4px; }
.tvtext p { font-size: 7px; line-height: 9px; font-weight: 600; color: #dbe8f6; white-space: nowrap; }
.x svg { width: 8px; height: 8px; }
.tvicons { grid-column: 1 / -1; display: flex; gap: 11px; padding: 5px 0 0 2px; }
.tvicons svg { width: 12px; height: 12px; }
.tv h3 { height: 19px; flex: none; background: #e9ebf0; border-bottom: 1px solid #d5d8dd; font-size: 9px; display: flex; align-items: center; gap: 4px; padding: 2px 0 0 3px; }
.tv .tri { border-width: 4px 3px 0; color: #555d68; margin: 0; }
.tv h3 svg { width: 8px; height: 8px; color: #6b7077; }
.g1 { margin-left: auto; }
.tv h3 .pop { margin-left: auto; }
.tv h3 .pop + .g1 { margin-left: 8px; }
.session { height: 32px; display: flex; align-items: center; gap: 3px; padding-left: 5px; font-size: 7px; white-space: nowrap; overflow: hidden; flex: none; }
.session svg { width: 12px; height: 12px; }
.session .ptr { width: 8px; margin-left: 3px; }
.chat { flex: 1; min-height: 0; display: flex; flex-direction: column; padding: 7px 0 0 3px; font-size: 7px; color: #222; }
.log { height: 78px; display: flex; border: 1px solid #555; border-right: 0; overflow: hidden; align-items: stretch; }
.lines { flex: 1; min-width: 0; display: flex; flex-direction: column; justify-content: flex-end; line-height: 9px; white-space: nowrap; }
.who { color: #79c143; }
.bar { width: 9px; background: #f0f0f0; display: flex; flex-direction: column; align-items: center; justify-content: space-between; padding: 4px 0; }
.bar svg { width: 6px; height: 4px; }
.bar i { width: 9px; height: 24px; background: #c9c9c9; margin-top: 30px; }
.chat input { height: 14px; margin-top: 4px; border: 1px solid #999; border-right: 0; }
.chat button { width: 50px; height: 14px; align-self: flex-end; margin-top: 5px; border: 1px solid #2b7fcb; background: #e4e6e8; font-size: 8px; }
.tv footer { height: 20px; flex: none; background: #3d3d3d; color: #fff; text-align: right; line-height: 19px; }
.tv footer a { text-decoration: underline; }
```
